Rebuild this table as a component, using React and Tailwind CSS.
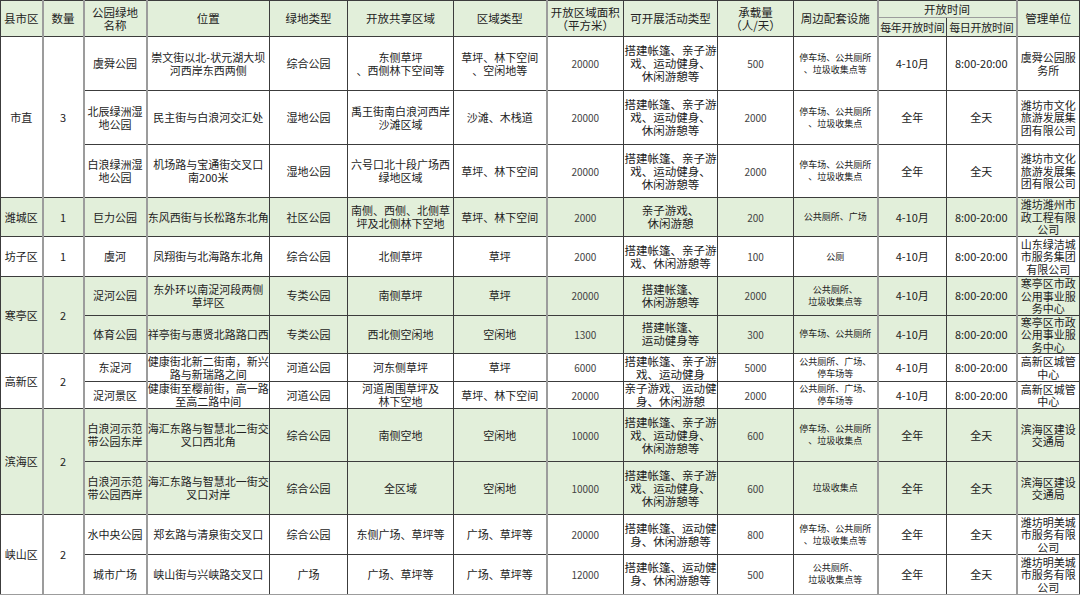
import React from "react";

const widths = [42, 41, 63, 123, 78, 106, 93, 77, 94, 76, 84, 69, 70, 63];
const widthCls = [
  "w-[42px]", "w-[41px]", "w-[63px]", "w-[123px]", "w-[78px]", "w-[106px]", "w-[93px]",
  "w-[77px]", "w-[94px]", "w-[76px]", "w-[84px]", "w-[69px]", "w-[70px]", "w-[63px]",
];

// thicker grey rules between some columns, like the spreadsheet export
const grayLeft = new Set([1, 2, 3, 7, 11, 13]);

const colText = [
  "text-[11px] leading-[13px]",
  "text-[11px] leading-[13px]",
  "text-[11px] leading-[13px]",
  "text-[11px] leading-[13px]",
  "text-[11px] leading-[13px]",
  "text-[11px] leading-[13px]",
  "text-[11px] leading-[13px]",
  "text-[10px] leading-[13px] text-[#444]",
  "text-[11.5px] leading-[13px] whitespace-nowrap",
  "text-[10px] leading-[13px] text-[#444]",
  "text-[9px] leading-[12px]",
  "text-[11px] leading-[13px]",
  "text-[11px] leading-[13px]",
  "text-[11px] leading-[12.5px]",
];

const fun3 = "搭建帐篷、亲子游\n戏、运动健身、\n休闲游憩等";

const groups = [
  {
    district: "市直",
    count: "3",
    heights: ["h-[54px]", "h-[54px]", "h-[53px]"],
    rows: [
      ["虞舜公园", "崇文街以北-状元湖大坝\n河西岸东西两侧", "综合公园", "东侧草坪\n、西侧林下空间等", "草坪、林下空间\n、空闲地等", "20000", fun3, "500", "停车场、公共厕所\n、垃圾收集点等", "4-10月", "8:00-20:00", "虞舜公园服\n务所"],
      ["北辰绿洲湿\n地公园", "民主街与白浪河交汇处", "湿地公园", "禹王街南白浪河西岸\n沙滩区域", "沙滩、木栈道", "20000", fun3, "2000", "停车场、公共厕所\n、垃圾收集点", "全年", "全天", "潍坊市文化\n旅游发展集\n团有限公司"],
      ["白浪绿洲湿\n地公园", "机场路与宝通街交叉口\n南200米", "湿地公园", "六号口北十段广场西\n绿地区域", "草坪、林下空间", "20000", fun3, "2000", "停车场、公共厕所\n、垃圾收集点", "全年", "全天", "潍坊市文化\n旅游发展集\n团有限公司"],
    ],
  },
  {
    district: "潍城区",
    count: "1",
    green: true,
    heights: ["h-[39px]"],
    rows: [
      ["巨力公园", "东风西街与长松路东北角", "社区公园", "南侧、西侧、北侧草\n坪及北侧林下空地", "草坪、林下空间", "2000", "亲子游戏、\n休闲游憩", "200", "公共厕所、广场", "4-10月", "8:00-20:00", "潍坊潍州市\n政工程有限\n公司"],
    ],
  },
  {
    district: "坊子区",
    count: "1",
    heights: ["h-[40px]"],
    rows: [
      ["虞河", "凤翔街与北海路东北角", "综合公园", "北侧草坪", "草坪", "2000", "搭建帐篷、亲子游\n戏、休闲游憩等", "100", "公厕", "4-10月", "8:00-20:00", "山东绿洁城\n市服务集团\n有限公司"],
    ],
  },
  {
    district: "寒亭区",
    count: "2",
    green: true,
    heights: ["h-[38px]", "h-[38px]"],
    rows: [
      ["浞河公园", "东外环以南浞河段两侧\n草坪区", "专类公园", "南侧草坪", "草坪", "20000", "搭建帐篷、\n休闲游憩等", "2000", "公共厕所、\n垃圾收集点等", "4-10月", "8:00-20:00", "寒亭区市政\n公用事业服\n务中心"],
      ["体育公园", "祥亭街与惠贤北路路口西", "专类公园", "西北侧空闲地", "空闲地", "1300", "搭建帐篷、\n运动健身等", "300", "停车场、公共厕所", "4-10月", "8:00-20:00", "寒亭区市政\n公用事业服\n务中心"],
    ],
  },
  {
    district: "高新区",
    count: "2",
    heights: ["h-[28px]", "h-[27px]"],
    rows: [
      ["东浞河", "健康街北新二街南，新兴\n路与新瑞路之间", "河道公园", "河东侧草坪", "草坪", "6000", "搭建帐篷、亲子游\n戏、运动健身", "5000", "公共厕所、广场、\n停车场等", "4-10月", "8:00-20:00", "高新区城管\n中心"],
      ["浞河景区", "健康街至樱前街，高一路\n至高二路中间", "河道公园", "河道周围草坪及\n林下空地", "草坪、林下空间", "20000", "亲子游戏、运动健\n身、休闲游憩", "2000", "公共厕所、广场、\n停车场等", "4-10月", "8:00-20:00", "高新区城管\n中心"],
    ],
  },
  {
    district: "滨海区",
    count: "2",
    green: true,
    heights: ["h-[53px]", "h-[53px]"],
    rows: [
      ["白浪河示范\n带公园东岸", "海汇东路与智慧北二街交\n叉口西北角", "综合公园", "南侧空地", "空闲地", "10000", fun3, "600", "停车场、公共厕所\n、垃圾收集点", "全年", "全天", "滨海区建设\n交通局"],
      ["白浪河示范\n带公园西岸", "海汇东路与智慧北一街交\n叉口对岸", "综合公园", "全区域", "空闲地", "10000", fun3, "600", "垃圾收集点", "全年", "全天", "滨海区建设\n交通局"],
    ],
  },
  {
    district: "峡山区",
    count: "2",
    heights: ["h-[40px]", "h-[40px]"],
    rows: [
      ["水中央公园", "郑玄路与清泉街交叉口", "综合公园", "东侧广场、草坪等", "广场、草坪等", "20000", "搭建帐篷、运动健\n身、休闲游憩等", "800", "停车场、公共厕所\n、垃圾收集点等", "全年", "全天", "潍坊明美城\n市服务有限\n公司"],
      ["城市广场", "峡山街与兴峡路交叉口", "广场", "广场、草坪等", "广场、草坪等", "12000", "搭建帐篷、运动健\n身、休闲游憩等", "500", "公共厕所、\n垃圾收集点等", "全年", "全天", "潍坊明美城\n市服务有限\n公司"],
    ],
  },
];

function Lines({ text }) {
  return text.split("\n").map((line, i) => (
    <span key={i} className="block">
      {line}
    </span>
  ));
}

function Cell({ col, text, rowSpan }) {
  const border = grayLeft.has(col)
    ? "border border-[#3c3c3c] border-l-2 border-l-[#9c9c9c]"
    : "border border-[#3c3c3c]";
  return (
    <td rowSpan={rowSpan} className={`${border} p-0 text-center align-middle`}>
      <div className={colText[col]}>
        <Lines text={text} />
      </div>
    </td>
  );
}

function Th({ col, children, rowSpan, colSpan, extra = "" }) {
  const border = grayLeft.has(col)
    ? "border border-[#3c3c3c] border-l-2 border-l-[#9c9c9c]"
    : "border border-[#3c3c3c]";
  return (
    <th
      rowSpan={rowSpan}
      colSpan={colSpan}
      className={`${border} p-0 text-center align-middle font-normal text-[11.5px] leading-[13px] whitespace-nowrap ${extra}`}
    >
      {children}
    </th>
  );
}

export default function App() {
  return (
    <div className="w-[1080px] h-[595px] bg-white overflow-hidden font-['Noto_Sans_CJK_SC',sans-serif] text-[#222]">
      <table className="table-fixed border-collapse w-[1079px] border border-[#3c3c3c] border-b-2 border-b-[#9c9c9c]">
        <colgroup>
          {widths.map((w, i) => (
            <col key={w + "-" + i} className={widthCls[i]} />
          ))}
        </colgroup>
        <thead className="bg-[#e2efda]">
          <tr className="h-[17px]">
            <Th col={0} rowSpan={2}>县市区</Th>
            <Th col={1} rowSpan={2}>数量</Th>
            <Th col={2} rowSpan={2}>
              <Lines text={"公园绿地\n名称"} />
            </Th>
            <Th col={3} rowSpan={2}>位置</Th>
            <Th col={4} rowSpan={2}>绿地类型</Th>
            <Th col={5} rowSpan={2}>开放共享区域</Th>
            <Th col={6} rowSpan={2}>区域类型</Th>
            <Th col={7} rowSpan={2}>
              <Lines text={"开放区域面积\n（平方米）"} />
            </Th>
            <Th col={8} rowSpan={2}>可开展活动类型</Th>
            <Th col={9} rowSpan={2}>
              <Lines text={"承载量\n（人/天）"} />
            </Th>
            <Th col={10} rowSpan={2}>周边配套设施</Th>
            <Th col={11} colSpan={2} extra="border-b-[#9c9c9c]">开放时间</Th>
            <Th col={13} rowSpan={2}>管理单位</Th>
          </tr>
          <tr className="h-[19px]">
            <Th col={11} extra="text-[11px] tracking-[-0.3px]">每年开放时间</Th>
            <Th col={12} extra="text-[11px] tracking-[-0.3px]">每日开放时间</Th>
          </tr>
        </thead>
        <tbody>
          {groups.map((g) =>
            g.rows.map((row, ri) => (
              <tr key={g.district + ri} className={`${g.heights[ri]} ${g.green ? "bg-[#e2efda]" : "bg-white"}`}>
                {ri === 0 && <Cell col={0} text={g.district} rowSpan={g.rows.length} />}
                {ri === 0 && <Cell col={1} text={g.count} rowSpan={g.rows.length} />}
                {row.map((text, ci) => (
                  <Cell key={ci} col={ci + 2} text={text} />
                ))}
              </tr>
            ))
          )}
        </tbody>
      </table>
    </div>
  );
}
